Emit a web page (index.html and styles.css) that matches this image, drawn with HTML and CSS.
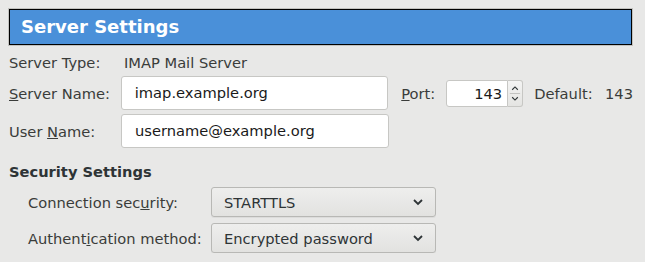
FILE: index.html
```html
<!DOCTYPE html>
<html>
<head>
<meta charset="utf-8">
<link rel="stylesheet" href="styles.css">
</head>
<body>
<div class="page">
  <div class="banner"><div class="banner-inner">Server Settings</div></div>
  <div class="server">
    <div class="row type-row">
      <span class="label">Server Type:</span>
      <span class="value">IMAP Mail Server</span>
    </div>
    <div class="row">
      <span class="label"><u>S</u>erver Name:</span>
      <div class="entry">imap.example.org</div>
      <span class="port-label"><u>P</u>ort:</span>
      <div class="spin">
        <div class="spin-entry">143</div>
        <div class="spin-btns">
          <svg width="15" height="27" viewBox="0 0 15 27">
            <path d="M4.5 9.5 L7.5 6.5 L10.5 9.5" fill="none" stroke="#2e3436" stroke-width="1.2"/>
            <line x1="2" y1="13.5" x2="13" y2="13.5" stroke="#c0c0bd" stroke-width="1"/>
            <path d="M4.5 17.5 L7.5 20.5 L10.5 17.5" fill="none" stroke="#2e3436" stroke-width="1.2"/>
          </svg>
        </div>
      </div>
      <span class="default-label">Default:</span>
      <span class="default-value">143</span>
    </div>
    <div class="row">
      <span class="label">User <u>N</u>ame:</span>
      <div class="entry">username@example.org</div>
    </div>
  </div>
  <div class="section-title">Security Settings</div>
  <div class="security">
    <span class="sec-label">Connection sec<u>u</u>rity:</span>
    <div class="combo"><span>STARTTLS</span>
      <svg class="chev" width="12" height="8" viewBox="0 0 12 8"><path d="M2 2 L6 6 L10 2" fill="none" stroke="#2e3436" stroke-width="1.8"/></svg>
    </div>
    <span class="sec-label">Authent<u>i</u>cation method:</span>
    <div class="combo"><span>Encrypted password</span>
      <svg class="chev" width="12" height="8" viewBox="0 0 12 8"><path d="M2 2 L6 6 L10 2" fill="none" stroke="#2e3436" stroke-width="1.8"/></svg>
    </div>
  </div>
</div>
</body>
</html>
```
FILE: styles.css
```css
html, body {
  margin: 0;
  padding: 0;
  background: #e8e8e7;
}
body {
  font-family: "DejaVu Sans", sans-serif;
  font-size: 14.67px;
  color: #2e3436;
}
.page {
  padding: 8px 12px 0 8px;
}
.banner {
  border: 1px solid #c2c2bf;
  height: 36px;
}
.banner-inner {
  border: 1px solid #000;
  background: #4a90d9;
  height: 36px;
  box-sizing: border-box;
  color: #fff;
  font-weight: bold;
  font-size: 18px;
  line-height: 34px;
  padding-left: 11px;
}
.server {
  padding-left: 1px;
  margin-top: 6px;
}
.row {
  display: flex;
  align-items: center;
  margin-bottom: 4px;
}
.type-row {
  height: 20px;
}
.label {
  width: 112px;
  color: #3a3c3a;
}
.value {
  margin-left: 3px;
  color: #3a3c3a;
}
.entry {
  width: 268px;
  height: 34px;
  box-sizing: border-box;
  background: #fff;
  border: 1px solid #c7c7c4;
  border-radius: 3px;
  padding-left: 13px;
  line-height: 32px;
  color: #1a1a1a;
}
.port-label {
  margin-left: 13px;
  width: 45px;
  color: #3a3c3a;
}
.spin {
  display: flex;
  height: 27px;
}
.spin-entry {
  width: 62px;
  height: 27px;
  box-sizing: border-box;
  background: #fff;
  border: 1px solid #c7c7c4;
  border-radius: 3px 0 0 3px;
  text-align: right;
  padding-right: 5px;
  line-height: 25px;
  color: #1a1a1a;
}
.spin-btns {
  width: 15px;
  height: 27px;
  box-sizing: border-box;
  border: 1px solid #c7c7c4;
  border-left: none;
  border-radius: 0 3px 3px 0;
  background: linear-gradient(#f4f4f3, #e4e4e2);
  display: flex;
}
.spin-btns svg {
  margin-top: -1px;
}
.default-label {
  margin-left: 11px;
  width: 71px;
  color: #3a3c3a;
}
.default-value {
  color: #3a3c3a;
}
.section-title {
  font-weight: bold;
  padding-left: 1px;
  margin-top: 14px;
  height: 20px;
  line-height: 20px;
  color: #2e3436;
}
.security {
  display: grid;
  grid-template-columns: 183px 225px;
  row-gap: 6px;
  align-items: center;
  padding-left: 20px;
  margin-top: 5px;
}
.sec-label {
  color: #3a3c3a;
}
.combo {
  height: 30px;
  box-sizing: border-box;
  border: 1px solid #b8b8b5;
  border-radius: 3px;
  background: linear-gradient(#eeeeed, #e2e2e0);
  display: flex;
  align-items: center;
  justify-content: space-between;
  padding: 0 11px 0 12px;
  color: #2e3436;
  box-shadow: 0 1px 0 rgba(0,0,0,0.05);
}
.chev {
  display: block;
}
```
